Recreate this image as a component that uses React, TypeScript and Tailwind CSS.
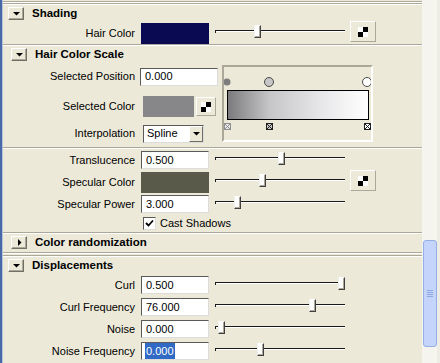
const font = { fontFamily: "'Liberation Sans', Arial, sans-serif" };

function Tri({ open }: { open: boolean }) {
  return (
    <svg width="7" height="7" viewBox="0 0 7 7">
      {open ? <polygon points="0,2 7,2 3.5,5.5" fill="#000" /> : <polygon points="2,0 2,7 5.5,3.5" fill="#000" />}
    </svg>
  );
}

function Header({ title, open, indent }: { title: string; open: boolean; indent?: boolean }) {
  return (
    <div className={`flex items-center h-[17px] ${indent ? "pl-[8px]" : "pl-[5px]"}`}>
      <div className="w-[16px] h-[13px] flex items-center justify-center bg-[#ece9d8] border border-t-white border-l-white border-r-[#716f64] border-b-[#716f64] shadow-[inset_-1px_-1px_0_#aca899]">
        <Tri open={open} />
      </div>
      <span className="ml-[8px] font-bold text-[11.5px] text-black leading-none">{title}</span>
    </div>
  );
}

function Sep() {
  return <div className="h-[2px] border-t border-[#aca899] bg-white" />;
}

function MapIcon() {
  return (
    <svg width="10" height="10" viewBox="0 0 10 10">
      <rect x="0" y="0" width="10" height="10" fill="#fff" />
      <rect x="5" y="0" width="5" height="5" fill="#000" />
      <rect x="0" y="5" width="5" height="5" fill="#000" />
    </svg>
  );
}

function MapButton({ small }: { small?: boolean }) {
  return (
    <div
      className={`${small ? "w-[20px] h-[19px]" : "w-[26px] h-[21px] mb-[3px]"} flex items-center justify-center bg-[#ece9d8] border border-t-white border-l-white border-r-[#aca899] border-b-[#aca899]`}
    >
      <MapIcon />
    </div>
  );
}

function Label({ text }: { text: string }) {
  return <div className="w-[132px] text-right text-[11px] text-black shrink-0 leading-none">{text}</div>;
}

function Field({ value, w = "w-[68px]", selected }: { value: string; w?: string; selected?: boolean }) {
  return (
    <div
      className={`${w} h-[18px] ml-[6px] bg-white border border-t-[#5a5a5a] border-l-[#5a5a5a] border-r-[#dcdcdc] border-b-[#dcdcdc] flex items-center pl-[3px] text-[11px] text-black shrink-0`}
    >
      {selected ? <span className="bg-[#316ac5] text-white px-[1px]">{value}</span> : <span className="px-[1px]">{value}</span>}
    </div>
  );
}

function Swatch({ color, w = "w-[68px]" }: { color: string; w?: string }) {
  return <div className={`${w} h-[21px] ml-[6px] shrink-0`} style={{ backgroundColor: color }} />;
}

function Slider({ thumb }: { thumb: number }) {
  // thumb = absolute x center of thumb in the screenshot; slider starts at x 215
  return (
    <div className="relative w-[130px] h-[13px] ml-[6px] mb-[4px] shrink-0">
      <div className="absolute left-0 right-0 top-[5px] h-[2px] border-t border-[#1a1a1a] bg-white" />
      <div className="absolute left-0 top-[5px] w-[1px] h-[3px] bg-[#1a1a1a]" />
      <div
        className="absolute top-0 w-[7px] h-[13px] bg-white border border-t-white border-l-[#f0f0f0] border-r-[#404040] border-b-[#404040] shadow-[inset_-1px_-1px_0_#aca899]"
        style={{ left: thumb - 215 - 3 }}
      />
    </div>
  );
}

function Row({ children }: { children: React.ReactNode }) {
  return <div className="flex items-center h-[22px]">{children}</div>;
}

function Ramp() {
  return (
    <div className="ml-[2px] mt-[2px] w-[151px] h-[77px] border-2 border-t-[#aca899] border-l-[#aca899] border-r-white border-b-white">
      <svg width="147" height="73" viewBox="2 2 147 73">
        <defs>
          <linearGradient id="rg" x1="0" x2="1" y1="0" y2="0">
            <stop offset="0" stopColor="#7a7a7c" />
            <stop offset="0.3" stopColor="#c6c6c8" />
            <stop offset="0.65" stopColor="#e6e6e8" />
            <stop offset="1" stopColor="#ffffff" />
          </linearGradient>
        </defs>
        <circle cx="5" cy="17" r="3.5" fill="#7d7d7d" />
        <circle cx="47" cy="17" r="4.5" fill="#c6c6c6" stroke="#4a4a4a" strokeWidth="1" />
        <circle cx="145" cy="17" r="4.5" fill="#fff" stroke="#4a4a4a" strokeWidth="1" />
        <rect x="5.5" y="25.5" width="141" height="29" fill="url(#rg)" stroke="#000" strokeWidth="1" />
        <g strokeWidth="1">
          <rect x="2.5" y="58.5" width="6" height="6" fill="#e8e8e8" stroke="#909090" />
          <path d="M3 59l5 5M8 59l-5 5" stroke="#909090" />
          <rect x="44.5" y="58.5" width="6" height="6" fill="#c8c8c8" stroke="#202020" />
          <path d="M45 59l5 5M50 59l-5 5" stroke="#202020" />
          <rect x="142.5" y="58.5" width="6" height="6" fill="#fff" stroke="#202020" />
          <path d="M143 59l5 5M148 59l-5 5" stroke="#202020" />
        </g>
      </svg>
    </div>
  );
}

function Dropdown() {
  return (
    <div className="ml-[8px] w-[61px] h-[18px] bg-white border border-t-[#5a5a5a] border-l-[#5a5a5a] border-r-[#dcdcdc] border-b-[#dcdcdc] flex items-center shrink-0">
      <span className="flex-1 pl-[3px] text-[11px] text-black">Spline</span>
      <div className="w-[14px] h-[16px] flex items-center justify-center bg-[#ece9d8] border border-t-white border-l-white border-r-[#716f64] border-b-[#716f64]">
        <Tri open />
      </div>
    </div>
  );
}

export default function App() {
  return (
    <div className="w-[440px] h-[363px] overflow-hidden bg-[#ece9d8] flex" style={font}>
      <div className="w-[3px] h-full flex shrink-0">
        <div className="w-[2px] h-full bg-[#4868a8]" />
        <div className="w-[1px] h-full bg-[#b8c4dc]" />
      </div>

      <div className="flex-1 flex flex-col">
        <div className="pt-[1px]">
          <Sep />
          <Sep />
        </div>

        <Header title="Shading" open />
        <Row>
          <Label text="Hair Color" />
          <Swatch color="#0a0a52" />
          <Slider thumb={257} />
          <div className="ml-[5px]"><MapButton /></div>
        </Row>
        <Sep />

        <Header title="Hair Color Scale" open indent />
        <div className="flex h-[84px]">
          <div className="w-[217px] flex flex-col pt-[2px]">
            <div className="flex items-center h-[23px]">
              <Label text="Selected Position" />
              <div className="-ml-[1px]"><Field value="0.000" w="w-[78px]" /></div>
            </div>
            <div className="flex items-center h-[23px] mt-[7px]">
              <Label text="Selected Color" />
              <div className="ml-[2px] flex items-center">
                <Swatch color="#87878a" w="w-[51px]" />
                <div className="ml-[2px]"><MapButton small /></div>
              </div>
            </div>
            <div className="flex items-center h-[21px] mt-[5px]">
              <Label text="Interpolation" />
              <Dropdown />
            </div>
          </div>
          <Ramp />
        </div>
        <Sep />

        <Row>
          <Label text="Translucence" />
          <Field value="0.500" />
          <Slider thumb={281} />
        </Row>
        <Row>
          <Label text="Specular Color" />
          <Swatch color="#5a5a4b" />
          <Slider thumb={262} />
          <div className="ml-[5px]"><MapButton /></div>
        </Row>
        <Row>
          <Label text="Specular Power" />
          <Field value="3.000" />
          <Slider thumb={237} />
        </Row>
        <div className="flex items-center h-[17px] pl-[140px]">
          <div className="w-[13px] h-[13px] bg-white border border-t-[#5a5a5a] border-l-[#5a5a5a] border-r-[#dcdcdc] border-b-[#dcdcdc] flex items-center justify-center">
            <svg width="9" height="9" viewBox="0 0 9 9">
              <path d="M1 4l2.5 2.5L8 1.5" stroke="#000" strokeWidth="1.8" fill="none" />
            </svg>
          </div>
          <span className="ml-[4px] text-[11px] text-black">Cast Shadows</span>
        </div>
        <Sep />

        <Header title="Color randomization" open={false} indent />
        <div className="pt-[1px]">
          <Sep />
          <div className="h-[1px]" />
          <Sep />
        </div>

        <Header title="Displacements" open />
        <Row>
          <Label text="Curl" />
          <Field value="0.500" />
          <Slider thumb={341} />
        </Row>
        <Row>
          <Label text="Curl Frequency" />
          <Field value="76.000" />
          <Slider thumb={312} />
        </Row>
        <Row>
          <Label text="Noise" />
          <Field value="0.000" />
          <Slider thumb={221} />
        </Row>
        <Row>
          <Label text="Noise Frequency" />
          <Field value="0.000" selected />
          <Slider thumb={260} />
        </Row>
      </div>

      <div className="w-[18px] h-full flex shrink-0 bg-[#f5f4ef]">
        <div className="w-[15px] flex flex-col">
          <div className="ml-[1px] mt-[240px] w-[14px] h-[107px] rounded-[3px] bg-[#c4d4fb] border border-[#95aee6] flex flex-col items-center justify-center gap-[1px]">
            <div className="w-[6px] h-[1px] bg-[#8ea8e0]" />
            <div className="w-[6px] h-[1px] bg-[#8ea8e0]" />
            <div className="w-[6px] h-[1px] bg-[#8ea8e0]" />
            <div className="w-[6px] h-[1px] bg-[#8ea8e0]" />
          </div>
        </div>
        <div className="w-[3px] h-full bg-[#eeede5]" />
      </div>
    </div>
  );
}
